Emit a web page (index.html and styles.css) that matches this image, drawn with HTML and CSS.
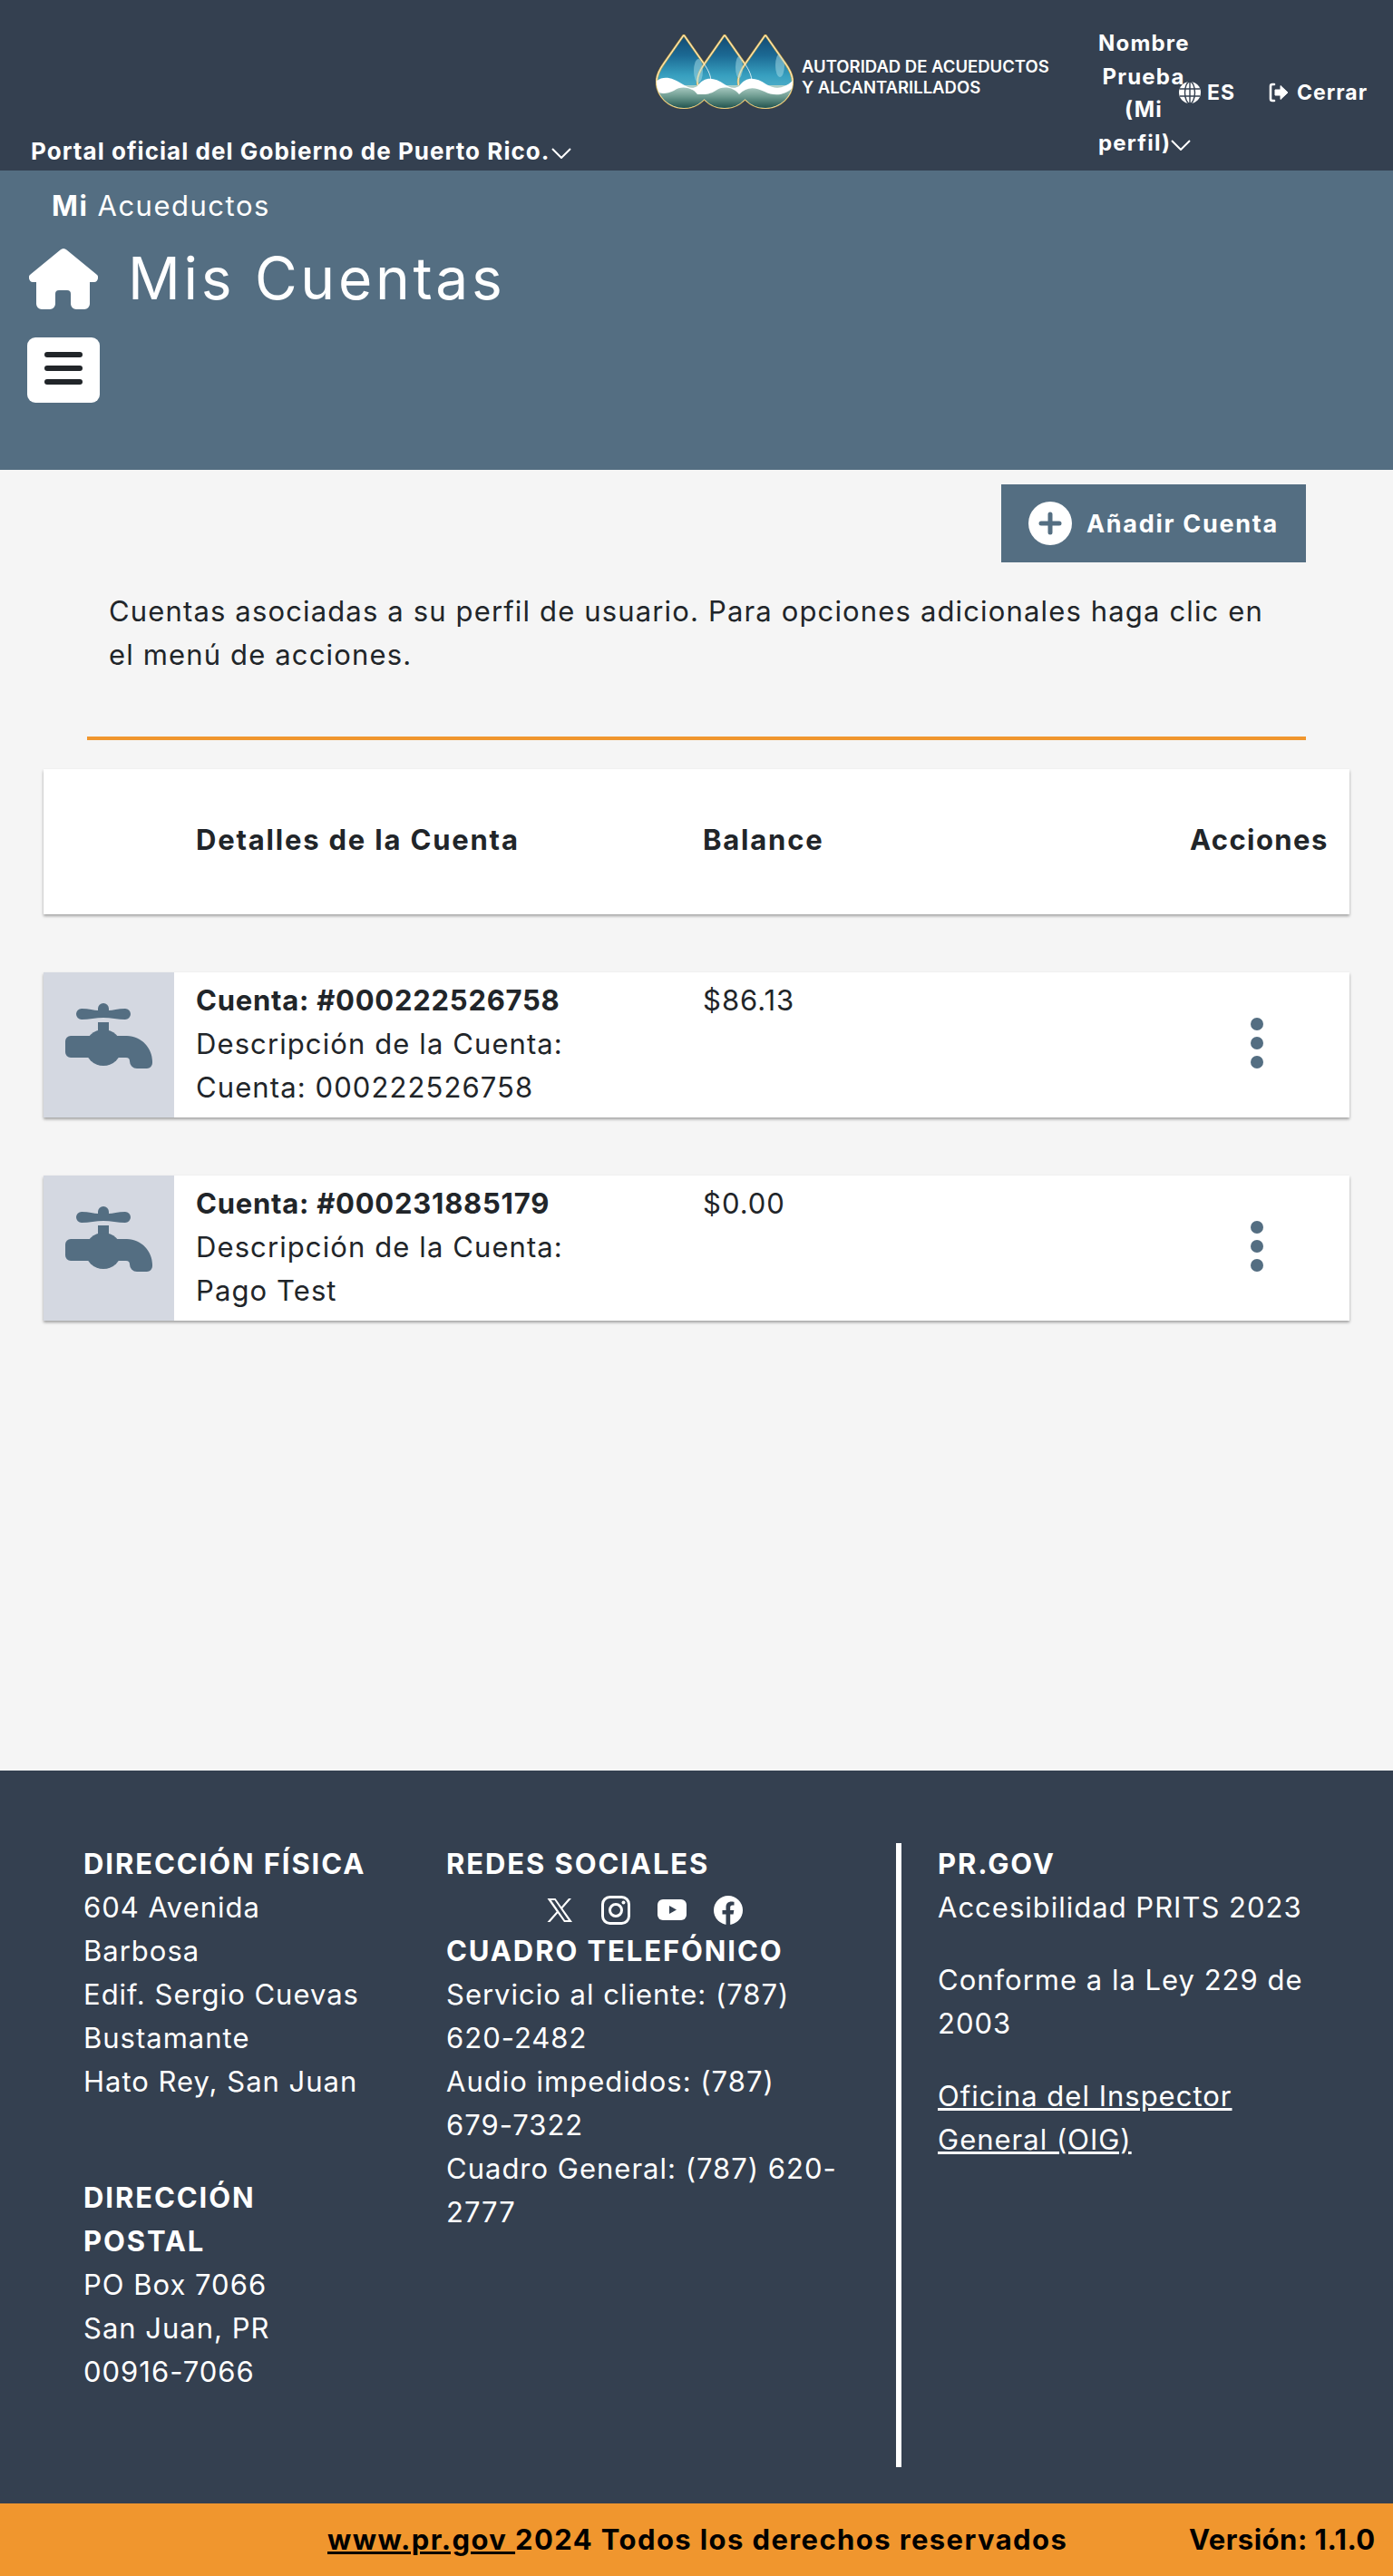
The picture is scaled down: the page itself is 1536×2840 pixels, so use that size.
FILE: index.html
```html
<!DOCTYPE html>
<html lang="es">
<head>
<meta charset="utf-8">
<title>Mis Cuentas</title>
<link rel="stylesheet" href="styles.css">
</head>
<body>
<svg class="sprites" width="0" height="0" aria-hidden="true">
  <defs>
    <symbol id="faucet" viewBox="0 0 144 160">
      <path d="M42 40 C50 40 56 42 60 42 V40 a6 6 0 0 1 12 0 V42 C76 42 82 40 90 40 a6 6 0 0 1 0 12 C82 52 74 50 66 50 C58 50 50 52 42 52 a6 6 0 0 1 0 -12Z"/>
      <rect x="60" y="55" width="12" height="12"/>
      <circle cx="66" cy="83" r="20"/>
      <path d="M30 70 H92 C108 70 120 84 120 98 V100 a6 6 0 0 1 -6 6 H103 a8 8 0 0 1 -8 -8 a4 4 0 0 0 -4 -4 H30 a6 6 0 0 1 -6 -6 V76 a6 6 0 0 1 6 -6Z"/>
    </symbol>
    <symbol id="kebab" viewBox="0 0 14 56">
      <circle cx="7" cy="7" r="7"/><circle cx="7" cy="28" r="7"/><circle cx="7" cy="49" r="7"/>
    </symbol>
    <symbol id="chev" viewBox="0 0 22 12">
      <path d="M1 1 L11 11 L21 1" fill="none" stroke="currentColor" stroke-width="2"/>
    </symbol>
  </defs>
</svg>

<header class="topbar">
  <div class="portal">Portal oficial del Gobierno de Puerto Rico.<svg class="chev"><use href="#chev"/></svg></div>
  <div class="brand">
    <svg class="logo" viewBox="0 0 152 82">
      <defs>
        <path id="drop" d="M30 1 Q30.500 1 31 2 L52 32 C57 39 60 46 60 52 A30 29 0 0 1 0 52 C0 46 3 39 8 32 L29 2 Q29.500 1 30 1Z"/>
        <clipPath id="drops">
          <use href="#drop" x="1"/><use href="#drop" x="46"/><use href="#drop" x="91"/>
        </clipPath>
        <linearGradient id="blue" x1="0" y1="0" x2="0" y2="1">
          <stop offset="0" stop-color="#134a72"/>
          <stop offset=".28" stop-color="#1c6a94"/>
          <stop offset=".55" stop-color="#379fbf"/>
          <stop offset=".75" stop-color="#52b1cb"/>
        </linearGradient>
        <linearGradient id="green" x1="0" y1="0" x2="0" y2="1">
          <stop offset="0" stop-color="#b4d3cb"/>
          <stop offset=".5" stop-color="#6a988d"/>
          <stop offset="1" stop-color="#1d4f4a"/>
        </linearGradient>
      </defs>
      <g fill="url(#blue)" stroke="#e0b64e" stroke-width="2.400">
        <use href="#drop" x="1"/><use href="#drop" x="46"/><use href="#drop" x="91"/>
      </g>
      <g fill="none" stroke="#fff" stroke-width=".8">
        <use href="#drop" x="1"/><use href="#drop" x="46"/><use href="#drop" x="91"/>
      </g>
      <g clip-path="url(#drops)">
        <ellipse cx="47" cy="40" rx="5" ry="13" fill="#a8dbe6" opacity=".5"/>
        <ellipse cx="92" cy="36" rx="4" ry="12" fill="#a8dbe6" opacity=".5"/>
        <ellipse cx="137" cy="34" rx="5" ry="13" fill="#a8dbe6" opacity=".5"/>
        <rect x="0" y="56" width="152" height="26" fill="url(#green)"/>
        <path d="M0 52 C8 45 18 47 30 55 C36 59 41 60 46 57 C54 46 64 47 76 55 C82 59 87 60 92 57 C100 46 110 47 122 55 C132 61 142 60 152 50 V58 C142 68 130 68 120 63 C108 57 100 58 92 66 C86 58 74 56 66 62 C58 67 52 66 46 66 C40 58 28 56 20 62 C12 66 4 66 0 62Z" fill="#fff"/>
      </g>
    </svg>
    <div class="brand-name">AUTORIDAD DE ACUEDUCTOS<br>Y ALCANTARILLADOS</div>
  </div>
  <div class="user">Nombre Prueba (Mi <span class="nowrap">perfil)<svg class="chev chev-sm"><use href="#chev"/></svg></span></div>
  <div class="lang">
    <svg class="globe" viewBox="0 0 24 24">
      <circle cx="12" cy="12" r="12" fill="#fff"/>
      <g fill="none" stroke="#344050" stroke-width="1.4">
        <ellipse cx="12" cy="12" rx="5.5" ry="12"/>
        <path d="M12 0 V24 M1 8 H23 M1 16 H23"/>
      </g>
    </svg>
    <span>ES</span>
  </div>
  <div class="logout">
    <svg class="exit" viewBox="0 0 22 24">
      <path d="M6 3 H4 Q2 3 2 5 V19 Q2 21 4 21 H6" fill="none" stroke="#fff" stroke-width="2.6" stroke-linecap="round"/>
      <path d="M7 9 H13 V4.5 L21 12 L13 19.500 V15 H7Z" fill="#fff" stroke="#fff" stroke-width="1" stroke-linejoin="round"/>
    </svg>
    <span>Cerrar</span>
  </div>
</header>

<section class="hero">
  <div class="app-name"><b>Mi</b> Acueductos</div>
  <div class="title-row">
    <svg class="home" viewBox="0 0 76 67"><path d="M38 0 Q36 0 34.500 1.500 L1 29 Q-.5 30.500 0 33 Q1 37 4 37 H8 V61 a6 6 0 0 0 6 6 H23 a6 6 0 0 0 6 -6 V50 a4 4 0 0 1 4 -4 H42 a4 4 0 0 1 4 4 V61 a6 6 0 0 0 6 6 H61 a6 6 0 0 0 6 -6 V37 H72 Q75 37 76 33 Q76.500 30.500 75 29 L41.500 1.500 Q40 0 38 0Z"/></svg>
    <h1>Mis Cuentas</h1>
  </div>
  <button class="menu-btn" type="button" aria-label="Menú"><span></span><span></span><span></span></button>
</section>

<main class="content">
  <div class="actions">
    <a class="add-btn">
      <svg class="plus" viewBox="0 0 48 48"><circle cx="24" cy="24" r="24" fill="#fff"/><path d="M24 14 V34 M14 24 H34" stroke="#546e82" stroke-width="5" stroke-linecap="round"/></svg>
      <span class="add-label">Añadir Cuenta</span>
    </a>
  </div>
  <p class="intro">Cuentas asociadas a su perfil de usuario. Para opciones adicionales haga clic en el menú de acciones.</p>
  <hr class="rule">

  <div class="acct-grid table-head">
    <div></div>
    <div>Detalles de la Cuenta</div>
    <div>Balance</div>
    <div class="head-last">Acciones</div>
  </div>

  <div class="acct-grid acct-row">
    <div class="acct-icon"><svg class="faucet"><use href="#faucet"/></svg></div>
    <div class="acct-details"><b>Cuenta: #000222526758</b><br>Descripción de la Cuenta:<br>Cuenta: 000222526758</div>
    <div class="acct-balance">$86.13</div>
    <div class="acct-menu"><svg class="kebab"><use href="#kebab"/></svg></div>
  </div>

  <div class="acct-grid acct-row">
    <div class="acct-icon"><svg class="faucet"><use href="#faucet"/></svg></div>
    <div class="acct-details"><b>Cuenta: #000231885179</b><br>Descripción de la Cuenta:<br>Pago Test</div>
    <div class="acct-balance">$0.00</div>
    <div class="acct-menu"><svg class="kebab"><use href="#kebab"/></svg></div>
  </div>
</main>

<footer class="footer">
  <div class="foot-col foot-a">
    <h2>DIRECCIÓN FÍSICA</h2>
    <p>604 Avenida Barbosa</p>
    <p>Edif. Sergio Cuevas Bustamante</p>
    <p>Hato Rey, San Juan</p>
    <h2 class="foot-gap">DIRECCIÓN POSTAL</h2>
    <p>PO Box 7066</p>
    <p>San Juan, PR 00916-7066</p>
  </div>
  <div class="foot-col foot-b">
    <h2>REDES SOCIALES</h2>
    <div class="socials">
      <svg viewBox="0 0 32 32"><path fill-rule="evenodd" d="M2.500 3 H11.500 L18 12.200 L26 3 H29 L19.300 14.100 L30 29 H21 L14 19.300 L5.500 29 H2.500 L12.700 17.400Z M6.800 5 L22 27 H25.800 L10.600 5Z" fill="#fff"/></svg>
      <svg viewBox="0 0 32 32"><rect x="1.500" y="1.500" width="29" height="29" rx="8" fill="none" stroke="#fff" stroke-width="3"/><circle cx="16" cy="16" r="6.500" fill="none" stroke="#fff" stroke-width="3"/><circle cx="24.500" cy="7.500" r="2" fill="#fff"/></svg>
      <svg viewBox="0 0 32 32"><rect x="0" y="4" width="32" height="23" rx="6" fill="#fff"/><path d="M13 11 L21 15.500 L13 20Z" fill="#344050"/></svg>
      <svg viewBox="0 0 32 32"><circle cx="16" cy="16" r="16" fill="#fff"/><path d="M13.500 32 V20.500 H9.500 V16 H13.500 V12.500 C13.500 8.500 16 6.500 19.500 6.500 C21 6.500 22.500 6.800 22.500 6.800 V10.500 H20.600 C18.800 10.500 18.200 11.600 18.200 12.800 V16 H22.300 L21.600 20.500 H18.200 V32Z" fill="#344050"/></svg>
    </div>
    <h2>CUADRO TELEFÓNICO</h2>
    <p>Servicio al cliente: (787) 620-2482</p>
    <p>Audio impedidos: (787) 679-7322</p>
    <p>Cuadro General: (787) 620-2777</p>
  </div>
  <div class="foot-col foot-c">
    <h2>PR.GOV</h2>
    <p>Accesibilidad PRITS 2023</p>
    <p class="foot-para">Conforme a la Ley 229 de 2003</p>
    <p class="foot-para"><a>Oficina del Inspector General (OIG)</a></p>
  </div>
</footer>

<div class="legal">
  <div class="legal-main"><a>www.pr.gov </a>2024 Todos los derechos reservados</div>
  <div class="legal-ver">Versión: 1.1.0</div>
</div>
</body>
</html>
```

FILE: styles.css
```css
* { box-sizing: border-box; }
html, body { margin: 0; padding: 0; }
body {
  width: 1536px;
  font-family: Inter, "Liberation Sans", sans-serif;
  font-size: 31px;
  line-height: 48px;
  letter-spacing: 1px;
  color: #212529;
  background: #f5f5f5;
}
.sprites { position: absolute; }
.nowrap { white-space: nowrap; }

/* top bar */
.topbar {
  height: 188px;
  background: #344050;
  color: #fff;
  display: flex;
  font-weight: 700;
  font-size: 23px;
  line-height: 36.500px;
  letter-spacing: 1px;
}
.topbar > * { flex: none; }
.portal {
  width: 723px;
  align-self: flex-end;
  padding: 0 0 3px 34px;
  white-space: nowrap;
  font-size: 26px;
  letter-spacing: 1.050px;
}
.chev { width: 22px; height: 12px; margin-left: 1px; vertical-align: 1px; }
.chev-sm { margin-left: 0; vertical-align: 0; }
.brand { width: 488px; display: flex; padding-top: 38px; align-items: flex-start; }
.logo { width: 152px; height: 82px; flex: none; }
.brand-name {
  margin: 24px 0 0 9px;
  font-size: 18.500px;
  line-height: 23px;
  font-weight: 600;
  letter-spacing: 0;
  white-space: nowrap;
}
.user { width: 100px; padding-top: 30px; text-align: center; font-size: 24px; letter-spacing: 1.200px; }
.lang { display: flex; align-items: center; gap: 7px; margin: 90px 0 0 -11px; height: 24px; }
.globe { width: 24px; height: 24px; }
.logout { display: flex; align-items: center; gap: 9px; margin: 90px 0 0 37px; height: 24px; white-space: nowrap; }
.exit { width: 22px; height: 24px; }

/* hero */
.hero { height: 330px; background: #546e82; color: #fff; padding: 15px 0 0 32px; }
.app-name { padding-left: 25px; font-size: 31px; line-height: 48px; letter-spacing: 1.500px; }
.app-name b { font-weight: 700; }
.title-row { display: flex; align-items: center; height: 96px; margin-top: 8px; }
.home { width: 76px; height: 67px; fill: #fff; flex: none; }
h1 { margin: 0 0 0 33px; font-size: 64px; line-height: 96px; font-weight: 400; letter-spacing: 3.700px; }
.menu-btn {
  display: flex; flex-direction: column; justify-content: center; align-items: center; gap: 9px;
  width: 80px; height: 72px; margin: 17px 0 0 -2px;
  background: #fff; border: 0; border-radius: 9px; padding: 0 0 4px;
}
.menu-btn span { width: 42px; height: 6px; border-radius: 3px; background: #212529; }

/* content */
.content { height: 1434px; padding: 16px 48px 0; }
.actions { display: flex; justify-content: flex-end; padding-right: 48px; }
.add-btn {
  display: flex; align-items: center; gap: 16px;
  width: 336px; height: 86px; padding-left: 30px;
  background: #546e82; color: #fff;
  font-size: 27px; font-weight: 700; letter-spacing: 1.700px;
}
.add-label { padding-top: 2px; }
.plus { width: 48px; height: 48px; }
.intro { margin: 30px 72px 0; letter-spacing: 1.150px; }
.rule { margin: 66px 48px 0; height: 4px; border: 0; background: #f0962e; }

.acct-grid { display: grid; grid-template-columns: 168px 559px 1fr 176px; background: #fff; box-shadow: 0 2px 3px rgba(0,0,0,.35); }
.table-head { height: 160px; margin-top: 32px; align-items: center; font-weight: 700; padding-bottom: 4px; letter-spacing: 1.800px; }
.head-last { letter-spacing: 1.400px; }
.acct-row { height: 160px; margin-top: 64px; }
.acct-icon { width: 144px; background: #d4d8e1; }
.faucet { display: block; width: 144px; height: 160px; fill: #546e82; }
.acct-details { padding-top: 7px; letter-spacing: 1.100px; }
.acct-details b { font-weight: 700; letter-spacing: .75px; }
.acct-balance { padding-top: 7px; }
.acct-menu { display: flex; justify-content: center; padding: 50px 28px 0 0; }
.kebab { width: 14px; height: 56px; fill: #546e82; }

/* footer */
.footer {
  height: 808px;
  background: #344050; color: #fff;
  display: grid; grid-template-columns: 400px 496px 1fr;
  padding: 80px 0 40px 92px;
}
.footer h2 { margin: 0; font-size: 31px; line-height: 48px; font-weight: 700; letter-spacing: 1.900px; }
.footer h2:first-child { margin-top: -1px; }
.footer p { margin: 0; }
.foot-a { padding-right: 80px; }
.foot-b { padding-right: 60px; }
.foot-c { border-left: 6px solid #fff; padding: 0 80px 0 40px; }
.footer .foot-gap { margin-top: 80px; }
.footer .foot-para { margin-top: 32px; }
.foot-c a { text-decoration: underline; }
.socials { display: flex; justify-content: center; gap: 30px; height: 48px; padding-top: 6px; align-items: center; }
.socials svg { width: 32px; height: 32px; }

/* legal */
.legal {
  height: 80px; background: #f0962e; color: #000;
  display: flex; align-items: center;
  font-weight: 700; letter-spacing: 1.400px;
  padding-left: 361px;
}
.legal-main { width: 950px; white-space: nowrap; }
.legal-main a { text-decoration: underline; }
.legal-ver { white-space: nowrap; letter-spacing: .5px; }
```
